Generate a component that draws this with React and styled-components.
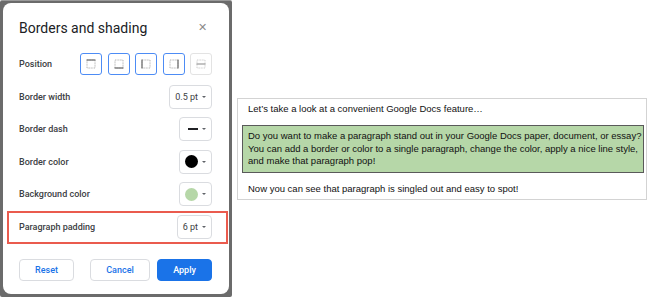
import React from 'react';
import styled, { createGlobalStyle } from 'styled-components';

const Global = createGlobalStyle`
  html, body { margin: 0; padding: 0; background: #fff; }
  body { font-family: Roboto, "Liberation Sans", Arial, sans-serif; }
`;

const Page = styled.div`
  display: flex;
  align-items: center;
  gap: 5px;
  width: 650px;
  height: 298px;
`;

const Frame = styled.div`
  align-self: flex-start;
  width: 232px;
  height: 297px;
  box-sizing: border-box;
  padding: 2px 3px 3px 3px;
  background: #6b6b6b;
  border-top: 1px solid #9a9a9a;
  border-radius: 2px;
  display: flex;
`;

const Card = styled.div`
  flex: 1;
  background: #fff;
  border-radius: 8px;
  display: flex;
  flex-direction: column;
  padding: 0 17px 0 16px;
`;

const Header = styled.div`
  height: 41px;
  display: flex;
  align-items: center;
  justify-content: space-between;
  padding-right: 5px;
  padding-top: 4px;
`;

const Title = styled.h1`
  margin: 0;
  font-size: 14px;
  font-weight: 400;
  color: #202124;
`;

const Close = styled.span`
  color: #8a8a8a;
  font-size: 11px;
  line-height: 1;
`;

const Row = styled.div`
  height: 32.5px;
  box-sizing: border-box;
  display: flex;
  align-items: center;
  justify-content: space-between;
  ${(p) =>
    p.$highlight &&
    `
    margin: 0 -16px 0 -12px;
    padding: 0 14px 0 10px;
    border: 2px solid #ea5b4e;
    height: 33px;
  `}
`;

const Label = styled.span`
  font-size: 9px;
  font-weight: 500;
  color: #3c4043;
`;

const PosGroup = styled.div`
  display: flex;
  gap: 5.5px;
`;

const PosButton = styled.div`
  width: 22px;
  height: 22px;
  box-sizing: border-box;
  border-radius: 3px;
  border: ${(p) => (p.$active ? '1.5px solid #4d8cf5' : '1px solid #e3e3e3')};
  display: flex;
  align-items: center;
  justify-content: center;
`;

const Select = styled.div`
  height: 24px;
  box-sizing: border-box;
  border: 1px solid #dadce0;
  border-radius: 4px;
  display: flex;
  align-items: center;
  gap: 4px;
  padding: 0 5px 0 ${(p) => p.$padLeft || 5}px;
  font-size: 9px;
  color: #3c4043;
`;

const Caret = styled.span`
  width: 0;
  height: 0;
  border-left: 2.5px solid transparent;
  border-right: 2.5px solid transparent;
  border-top: 2.5px solid #5f6368;
`;

const Dash = styled.span`
  width: 10px;
  height: 2px;
  background: #202124;
`;

const Swatch = styled.span`
  width: 13px;
  height: 13px;
  border-radius: 50%;
  background: ${(p) => p.$color};
`;

const Footer = styled.div`
  margin-top: 15px;
  display: flex;
  justify-content: space-between;
  align-items: center;
`;

const BtnGroup = styled.div`
  display: flex;
  gap: 7px;
`;

const Button = styled.button`
  height: 22px;
  width: ${(p) => p.$w}px;
  box-sizing: border-box;
  border-radius: 4px;
  font-family: Roboto, "Liberation Sans", Arial, sans-serif;
  font-size: 9px;
  font-weight: 500;
  cursor: pointer;
  padding: 0;
  border: 1px solid ${(p) => (p.$primary ? '#1a73e8' : '#dadce0')};
  background: ${(p) => (p.$primary ? '#1a73e8' : '#fff')};
  color: ${(p) => (p.$primary ? '#fff' : '#1a73e8')};
`;

const Doc = styled.div`
  width: 410px;
  box-sizing: border-box;
  border: 1px solid #d3d3d3;
  padding: 4px 2px 4px 4px;
  font-family: "Liberation Sans", Arial, sans-serif;
  font-size: 9.5px;
  line-height: 12.5px;
  color: #111;
`;

const Para = styled.p`
  margin: 0;
  padding: 0 0 0 ${(p) => p.$indent || 0}px;
`;

const Shaded = styled.p`
  margin: 10px 0;
  padding: 4px 0 4px 5px;
  background: #b6d7a8;
  border: 1px solid #5a5a5a;
`;

function PosIcon({ side }) {
  const light = '#b5b5b5';
  const dark = '#6b6b6b';
  return (
    <svg width="10" height="10" viewBox="0 0 10 10">
      {side !== 'between' ? (
        <>
          <rect x="1" y="1" width="8" height="8" fill="none" stroke={light} strokeWidth="1" strokeDasharray="1 0.6" />
          {side === 'top' && <line x1="0.5" y1="1" x2="9.5" y2="1" stroke={dark} strokeWidth="1.2" />}
          {side === 'bottom' && <line x1="0.5" y1="9" x2="9.5" y2="9" stroke={dark} strokeWidth="1.2" />}
          {side === 'left' && <line x1="1" y1="0.5" x2="1" y2="9.5" stroke={dark} strokeWidth="1.2" />}
          {side === 'right' && <line x1="9" y1="0.5" x2="9" y2="9.5" stroke={dark} strokeWidth="1.2" />}
        </>
      ) : (
        <>
          <rect x="1" y="1" width="8" height="8" fill="none" stroke="#cfcfcf" strokeWidth="1" strokeDasharray="1 0.6" />
          <line x1="0.5" y1="5" x2="9.5" y2="5" stroke="#9a9a9a" strokeWidth="1.2" />
        </>
      )}
    </svg>
  );
}

export default function App() {
  return (
    <>
      <Global />
      <Page>
        <Frame>
          <Card>
            <Header>
              <Title>Borders and shading</Title>
              <Close>✕</Close>
            </Header>
            <Row>
              <Label>Position</Label>
              <PosGroup>
                <PosButton $active><PosIcon side="top" /></PosButton>
                <PosButton $active><PosIcon side="bottom" /></PosButton>
                <PosButton $active><PosIcon side="left" /></PosButton>
                <PosButton $active><PosIcon side="right" /></PosButton>
                <PosButton><PosIcon side="between" /></PosButton>
              </PosGroup>
            </Row>
            <Row>
              <Label>Border width</Label>
              <Select>0.5 pt<Caret /></Select>
            </Row>
            <Row>
              <Label>Border dash</Label>
              <Select $padLeft={8}><Dash /><Caret /></Select>
            </Row>
            <Row>
              <Label>Border color</Label>
              <Select $padLeft={5}><Swatch $color="#000" /><Caret /></Select>
            </Row>
            <Row>
              <Label>Background color</Label>
              <Select $padLeft={5}><Swatch $color="#b6d7a8" /><Caret /></Select>
            </Row>
            <Row $highlight>
              <Label>Paragraph padding</Label>
              <Select>6 pt<Caret /></Select>
            </Row>
            <Footer>
              <Button $w={55}>Reset</Button>
              <BtnGroup>
                <Button $w={60}>Cancel</Button>
                <Button $w={55} $primary>Apply</Button>
              </BtnGroup>
            </Footer>
          </Card>
        </Frame>
        <Doc>
          <Para $indent={6}>Let’s take a look at a convenient Google Docs feature…</Para>
          <Shaded>
            Do you want to make a paragraph stand out in your Google Docs paper, document, or essay? You can add a border or color to a single paragraph, change the color, apply a nice line style, and make that paragraph pop!
          </Shaded>
          <Para $indent={6}>Now you can see that paragraph is singled out and easy to spot!</Para>
        </Doc>
      </Page>
    </>
  );
}
